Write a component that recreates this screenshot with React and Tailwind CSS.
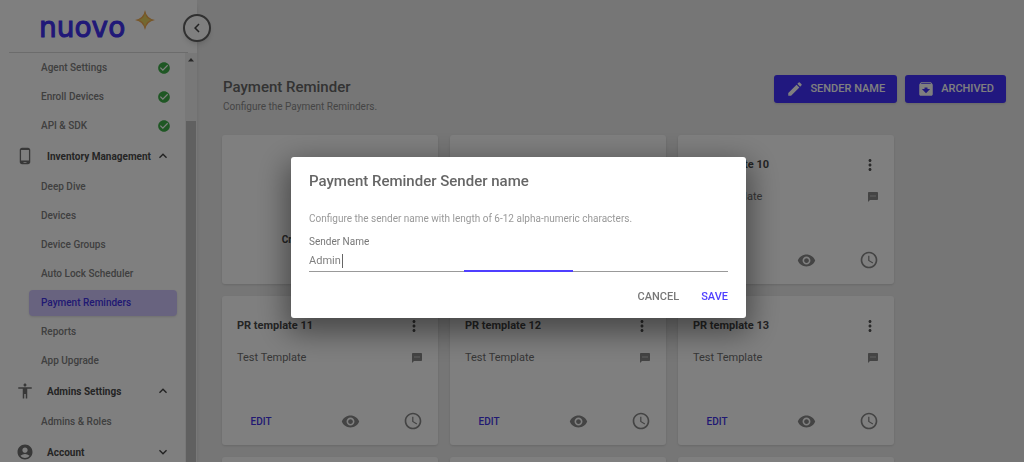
import React, { useState } from 'react';
import {
  MdAccessibility,
  MdAccessTime,
  MdAccountCircle,
  MdAdd,
  MdArchive,
  MdCheckCircle,
  MdChevronLeft,
  MdEdit,
  MdExpandLess,
  MdExpandMore,
  MdMoreVert,
  MdPhoneAndroid,
  MdTextsms,
  MdVisibility,
} from 'react-icons/md';

const NAV = [
  { label: 'Agent Settings', done: true },
  { label: 'Enroll Devices', done: true },
  { label: 'API & SDK', done: true },
  { label: 'Inventory Management', section: true, icon: MdPhoneAndroid, open: true },
  { label: 'Deep Dive' },
  { label: 'Devices' },
  { label: 'Device Groups' },
  { label: 'Auto Lock Scheduler' },
  { label: 'Payment Reminders', active: true },
  { label: 'Reports' },
  { label: 'App Upgrade' },
  { label: 'Admins Settings', section: true, icon: MdAccessibility, open: true },
  { label: 'Admins & Roles' },
  { label: 'Account', section: true, icon: MdAccountCircle, open: false },
];

const TEMPLATES = [9, 10, 11, 12, 13, 14, 15, 16];

const Logo = () => (
  <div className="h-[53px] mx-[9px] pl-[30px] pt-2.5 border-b border-[#d8d8d8] flex items-start">
    <span className="font-['DejaVu_Sans',sans-serif] text-[28px] leading-9 text-[#4030f0] [-webkit-text-stroke:1px_#4030f0]">
      nuovo
    </span>
    <svg viewBox="0 0 20 20" className="w-5 h-5 ml-2.5">
      <path d="M10 0 Q11.5 8.5 20 10 Q11.5 11.5 10 20 Q8.500 11.5 0 10 Q8.500 8.500 10 0Z" fill="#f0a850" />
      <path d="M10 3 Q11 9 17 10 Q11 11 10 17 Q9 11 3 10 Q9 9 10 3Z" fill="#e6d060" />
    </svg>
  </div>
);

const NavSection = ({ item }) => {
  const Icon = item.icon;
  const Chevron = item.open ? MdExpandLess : MdExpandMore;
  return (
    <button type="button" className="w-full h-8 shrink-0 flex items-center pl-4 pr-3.5 text-left">
      <Icon className="w-[18px] h-[18px] shrink-0 text-[#707070]" />
      <span className="ml-[13px] flex-1 whitespace-nowrap font-bold text-[10px] text-[#4a4a4a]">{item.label}</span>
      <Chevron className="w-4 h-4 shrink-0 text-[#444]" />
    </button>
  );
};

const NavLink = ({ item }) => (
  <div className="h-[29px] shrink-0 pl-[29px] pr-2 flex items-center">
    <a
      href="#"
      className={`flex-1 h-[26px] rounded-[4px] pl-3 pr-1.5 flex items-center justify-between text-[10px] font-medium ${
        item.active ? 'bg-[#d0c6ff] text-[#4233e6] shadow' : 'text-[#808080]'
      }`}
    >
      {item.label}
      {item.done && <MdCheckCircle className="w-3.5 h-3.5 text-[#3fae49]" />}
    </a>
  </div>
);

const Sidebar = () => (
  <aside className="relative z-10 w-[197px] shrink-0 h-screen bg-white shadow-md flex flex-col">
    <Logo />
    <button
      type="button"
      aria-label="Collapse menu"
      className="absolute top-3.5 -right-3.5 w-7 h-7 rounded-full bg-white border-2 border-[#606060] shadow-md flex items-center justify-center"
    >
      <MdChevronLeft className="w-[18px] h-[18px] text-[#444]" />
    </button>
    <div className="flex-1 min-h-0 flex">
      <nav className="flex-1 min-w-0 overflow-hidden flex flex-col">
        {NAV.map((item) =>
          item.section ? <NavSection key={item.label} item={item} /> : <NavLink key={item.label} item={item} />
        )}
      </nav>
      {/* Scrollbar */}
      <div className="w-3 bg-[#f1f1f1] flex flex-col items-center">
        <svg viewBox="0 0 8 5" className="w-2 h-[5px] mt-1">
          <path d="M1 4.500 L4 1 L7 4.500Z" fill="#505050" />
        </svg>
        <div className="w-2.5 flex-1 mt-[59px] bg-[#c1c1c1]" />
      </div>
    </div>
  </aside>
);

const TemplateCard = ({ number }) => (
  <article className="w-[216px] h-[149px] rounded-[3px] bg-white shadow-sm px-[15px] flex flex-col">
    <div className="h-7 mt-4 flex items-center justify-between">
      <h2 className="font-bold text-[11px] text-[#4a4a4a]">PR template {number}</h2>
      <button type="button" aria-label="More" className="text-[#555]">
        <MdMoreVert className="w-[18px] h-[18px]" />
      </button>
    </div>
    <div className="h-5 mt-2 flex items-center justify-between">
      <p className="text-[11px] text-[#6e6e6e]">Test Template</p>
      <MdTextsms className="w-3 h-3 text-[#888]" />
    </div>
    <div className="mt-auto mb-3.5 flex items-center justify-between">
      <button type="button" className="w-12 font-medium text-[10px] text-[#4233e6]">EDIT</button>
      <button type="button" aria-label="Preview" className="ml-3 text-[#888]">
        <MdVisibility className="w-[19px] h-[19px]" />
      </button>
      <button type="button" aria-label="Schedule" className="text-[#888]">
        <MdAccessTime className="w-5 h-5" />
      </button>
    </div>
  </article>
);

const ActionButton = ({ icon: Icon, onClick, children }) => (
  <button
    type="button"
    onClick={onClick}
    className="h-7 px-3 rounded-[3px] bg-[#4230ff] text-white shadow flex items-center gap-1.5 font-medium text-[11px]"
  >
    <Icon className="w-[18px] h-[18px]" />
    {children}
  </button>
);

const SenderNameDialog = ({ onClose }) => {
  const [name, setName] = useState('Admin ');

  return (
    <div className="fixed inset-0 z-20 bg-black/50 flex items-center justify-center pl-[13px] pt-[13px]">
      <form
        role="dialog"
        aria-labelledby="dialog-title"
        onSubmit={(e) => e.preventDefault()}
        className="w-full max-w-[455px] rounded-[3px] bg-white px-[18px] pt-3.5 pb-2 shadow-[0_10px_30px_4px_rgba(0,0,0,0.45)]"
      >
        <h2 id="dialog-title" className="font-medium text-[15px] leading-5 text-[#666]">Payment Reminder Sender name</h2>
        <p className="mt-5 text-[10px] leading-4 text-[#999]">
          Configure the sender name with length of 6-12 alpha-numeric characters.
        </p>
        <label htmlFor="sender-name" className="block mt-[7px] text-[10px] leading-4 text-[#777]">Sender Name</label>
        <div className="relative border-b border-[#999]">
          <input
            id="sender-name"
            value={name}
            onChange={(e) => setName(e.target.value)}
            className="block w-full h-[21px] text-[11px] text-[#808080] outline-none"
          />
          {/* Caret and the focus underline while it grows from the middle */}
          <span className="absolute left-[33px] top-1 w-px h-3.5 bg-[#666]" />
          <span className="absolute left-[37%] w-[26%] -bottom-px h-0.5 bg-[#4f3fff]" />
        </div>
        <div className="mt-3 flex justify-end gap-4">
          <button type="button" onClick={onClose} className="h-[26px] pl-2 pr-1.5 font-medium text-[11px] text-[#777]">CANCEL</button>
          <button type="submit" className="h-[26px] font-medium text-[11px] text-[#4f3fff]">SAVE</button>
        </div>
      </form>
    </div>
  );
};

const App = () => {
  const [dialogOpen, setDialogOpen] = useState(true);

  return (
    <div className="h-screen overflow-hidden flex bg-[#ededed] font-['Roboto',sans-serif]">
      <Sidebar />
      <main className="flex-1 min-w-0 pl-[25px] pr-[18px] pt-[75px]">
        <header className="flex items-start justify-between">
          <div className="pl-px pt-0.5">
            <h1 className="font-medium text-[15px] leading-5 text-[#666]">Payment Reminder</h1>
            <p className="mt-0.5 text-[10px] leading-4 text-[#8a8a8a]">Configure the Payment Reminders.</p>
          </div>
          <div className="flex gap-2">
            <ActionButton icon={MdEdit} onClick={() => setDialogOpen(true)}>SENDER NAME</ActionButton>
            <ActionButton icon={MdArchive}>ARCHIVED</ActionButton>
          </div>
        </header>

        <section className="mt-5 flex flex-wrap gap-3">
          <button
            type="button"
            className="w-[216px] h-[149px] rounded-[3px] bg-white shadow-sm pt-4 flex flex-col items-center justify-center gap-3 font-bold text-[10px] text-[#4a4a4a]"
          >
            <MdAdd className="w-8 h-8 text-[#4230ff]" />
            Create New Template
          </button>
          {TEMPLATES.map((number) => (
            <TemplateCard key={number} number={number} />
          ))}
        </section>
      </main>

      {dialogOpen && <SenderNameDialog onClose={() => setDialogOpen(false)} />}
    </div>
  );
};

export default App;
